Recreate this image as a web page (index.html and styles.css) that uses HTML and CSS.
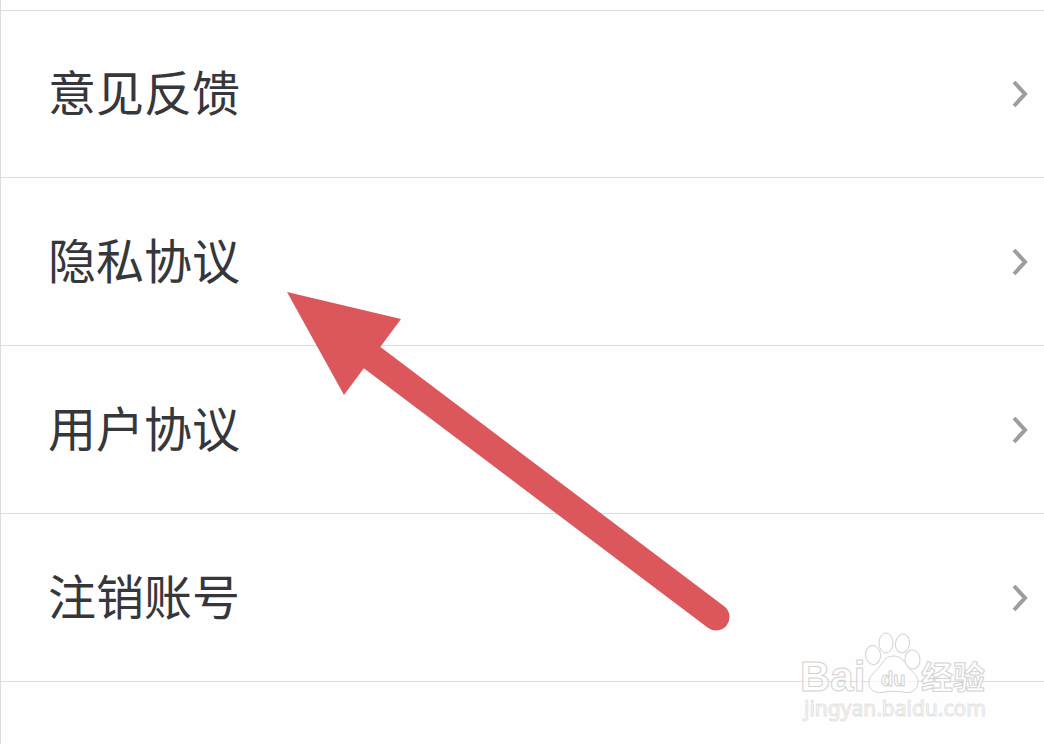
FILE: index.html
```html
<!DOCTYPE html>
<html lang="zh-CN">
<head>
  <meta charset="UTF-8" />
  <meta name="viewport" content="width=device-width, initial-scale=1.0"/>
  <title>设置</title>
  <link rel="stylesheet" href="styles.css">
</head>
<body>

  <nav class="settings-list">
    <a href="#feedback" class="settings-item">
      <span>意见反馈</span>
      <svg class="chevron" viewBox="0 0 16 28" aria-hidden="true"><path d="M2 2L13 14L2 26"/></svg>
    </a>
    <a href="#privacy" class="settings-item">
      <span>隐私协议</span>
      <svg class="chevron" viewBox="0 0 16 28" aria-hidden="true"><path d="M2 2L13 14L2 26"/></svg>
    </a>
    <a href="#terms" class="settings-item">
      <span>用户协议</span>
      <svg class="chevron" viewBox="0 0 16 28" aria-hidden="true"><path d="M2 2L13 14L2 26"/></svg>
    </a>
    <a href="#close-account" class="settings-item">
      <span>注销账号</span>
      <svg class="chevron" viewBox="0 0 16 28" aria-hidden="true"><path d="M2 2L13 14L2 26"/></svg>
    </a>
  </nav>

  <!-- pointer to the privacy row -->
  <svg class="pointer" viewBox="0 0 444 340" aria-hidden="true">
    <path class="pointer-head" d="M1 0L115 27L95 54L78 76L58 103Z"/>
    <path class="pointer-shaft" d="M80 61L430 325"/>
  </svg>

  <!-- watermark -->
  <svg class="watermark" viewBox="0 0 200 100" role="img" aria-label="Baidu 经验">
    <g class="paw">
      <ellipse cx="73" cy="24" rx="7.5" ry="9.5" transform="rotate(-6 73 24)"/>
      <ellipse cx="86" cy="12" rx="7" ry="10"/>
      <ellipse cx="102.5" cy="12.5" rx="7" ry="9.5" transform="rotate(10 102.5 12.5)"/>
      <ellipse cx="112.5" cy="28.5" rx="7.5" ry="9.5" transform="rotate(-6 112.5 28.5)"/>
      <path d="M94 25C87 25 84 29 80 35C76 41 69 44 69 52C69 60 77 63 85 61C91 60 97 60 103 61C111 63 118 59 118 51C118 44 112 41 108 36C104 30 101 25 94 25Z"/>
    </g>
    <text class="mark-bai" x="0" y="60">Bai</text>
    <text class="mark-du" x="81" y="55">du</text>
    <text class="mark-cn" x="121" y="58">经验</text>
    <text class="mark-url" x="4" y="85">jingyan.baidu.com</text>
  </svg>

</body>
</html>
```
FILE: styles.css
```css
:root {
  --text: #36373b;
  --line: #dcdcdc;
  --chevron: #9b9da0;
  --red: #db575c;
  --mark: #d2d2d2;
}

* {
  box-sizing: border-box;
}

body {
  margin: 0;
  min-height: 100vh;
  position: relative;
  overflow: hidden;
  padding-top: 10px;
  background: #fefefe;
  border-left: 1px solid var(--line);
  color: var(--text);
  font-family: "Noto Sans CJK SC", sans-serif;
}

.settings-list {
  border-top: 1px solid var(--line);
}

.settings-item {
  display: flex;
  align-items: center;
  justify-content: space-between;
  height: 168px;
  padding: 0 16px 0 47px;
  border-bottom: 1px solid var(--line);
  color: inherit;
  font-size: 48px;
  line-height: 72px;
  text-decoration: none;
}

.settings-item:first-child {
  height: 167px;
}

.settings-item span {
  padding-bottom: 8px;
}

.chevron {
  width: 16px;
  height: 28px;
  fill: none;
  stroke: var(--chevron);
  stroke-width: 4;
}

.pointer {
  position: absolute;
  top: 292px;
  left: 285px;
  width: 444px;
  height: 340px;
  overflow: visible;
}

.pointer-head {
  fill: var(--red);
}

.pointer-shaft {
  fill: none;
  stroke: var(--red);
  stroke-width: 27;
  stroke-linecap: round;
}

.watermark {
  position: absolute;
  right: 44px;
  bottom: 13px;
  width: 200px;
  height: 100px;
  fill: #fff;
  fill-opacity: 0.7;
  stroke: var(--mark);
  stroke-width: 1;
}

.mark-bai {
  font: bold 42px "Liberation Sans", sans-serif;
}

.mark-du {
  font: bold 20px "Liberation Sans", sans-serif;
}

.mark-cn {
  font: bold 32px "Noto Sans CJK SC", sans-serif;
}

.mark-url {
  font: 21px "Noto Sans", sans-serif;
  stroke: #e2e2e2;
}
```
